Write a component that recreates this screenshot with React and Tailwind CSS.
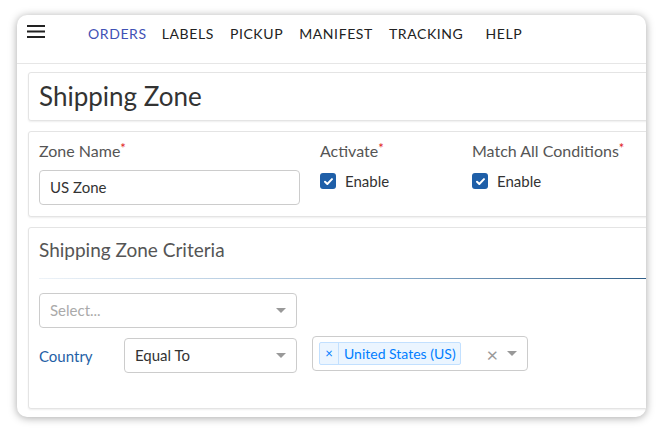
import React from 'react';

const navItems = [
  { label: 'ORDERS', active: true, ml: 'ml-[43px]' },
  { label: 'LABELS', ml: 'ml-[15px]' },
  { label: 'PICKUP', ml: 'ml-[16px]' },
  { label: 'MANIFEST', ml: 'ml-[16px]' },
  { label: 'TRACKING', ml: 'ml-[16px]' },
  { label: 'HELP', ml: 'ml-[22px]' },
];

function Caret() {
  return <span className="block w-0 h-0 border-x-[5px] border-t-[5px] border-x-transparent border-t-[#999]" />;
}

function Checkbox() {
  return (
    <span className="flex items-center justify-center w-4 h-4 rounded-[3px] bg-[#1f5fa8]">
      <svg viewBox="0 0 12 12" className="w-[11px] h-[11px]">
        <path d="M2.2 6.3l2.5 2.4L9.8 3.4" stroke="white" strokeWidth="2.2" fill="none" strokeLinecap="round" strokeLinejoin="round" />
      </svg>
    </span>
  );
}

function Label({ children }) {
  return (
    <div className="text-[16px] leading-5 text-[#555]">
      {children}
      <span className="text-[#e02020] text-[13px] leading-none align-top relative top-[1px]">*</span>
    </div>
  );
}

function Card({ className = '', children }) {
  return (
    <div className={`bg-white border border-[#e4e4e4] rounded-[3px] shadow-[0_1px_2px_rgba(0,0,0,0.07)] -mr-[8px] ${className}`}>
      {children}
    </div>
  );
}

export default function App() {
  return (
    <div className="min-h-[435px] bg-white pt-[15px] pl-[17px] font-['Lato',sans-serif]">
      <div className="w-[629px] h-[402px] bg-white rounded-[10px] overflow-hidden shadow-[0_1px_8px_rgba(0,0,0,0.35)]">
        <nav className="h-[49px] border-b border-[#e6e6e6] flex items-start">
          <svg viewBox="0 0 18 13" className="w-[18px] h-[13px] ml-[10px] mt-[10px]">
            <rect x="0" y="0" width="18" height="2" fill="#222" />
            <rect x="0" y="5.5" width="18" height="2" fill="#222" />
            <rect x="0" y="11" width="18" height="2" fill="#222" />
          </svg>
          {navItems.map((item) => (
            <span
              key={item.label}
              className={`${item.ml} mt-[9px] text-[14px] leading-5 tracking-[0.6px] ${item.active ? 'text-[#3f51b5]' : 'text-[#222]'}`}
            >
              {item.label}
            </span>
          ))}
        </nav>

        <div className="pl-[11px] pt-[8px] flex flex-col gap-[10px]">
          <Card className="pt-[7px] pb-[8px] px-[10px]">
            <h1 className="text-[26px] leading-8 text-[#333]">Shipping Zone</h1>
          </Card>

          <Card className="pt-[9px] pb-[11px] px-[10px] flex">
            <div className="w-[281px]">
              <Label>Zone Name</Label>
              <div className="mt-[9px] w-[261px] h-[35px] border border-[#ccc] rounded-[4px] flex items-center px-[10px] text-[15px] text-[#333]">
                US Zone
              </div>
            </div>
            <div className="w-[152px]">
              <Label>Activate</Label>
              <div className="mt-[10px] flex items-center gap-[9px]">
                <Checkbox />
                <span className="text-[15px] leading-5 text-[#333]">Enable</span>
              </div>
            </div>
            <div>
              <Label>Match All Conditions</Label>
              <div className="mt-[10px] flex items-center gap-[9px]">
                <Checkbox />
                <span className="text-[15px] leading-5 text-[#333]">Enable</span>
              </div>
            </div>
          </Card>

          <Card className="pt-[10px] pb-[35px] pl-[10px]">
            <h2 className="text-[19px] leading-6 text-[#555]">Shipping Zone Criteria</h2>
            <div className="mt-[16px] h-px bg-gradient-to-r from-[#eef3f8] via-[#9bbad6] to-[#2c5c86]" />
            <div className="mt-[14px] w-[258px] h-[35px] border border-[#ccc] rounded-[4px] flex items-center justify-between pl-[10px] pr-[10px]">
              <span className="text-[15px] text-[#aaa]">Select...</span>
              <Caret />
            </div>
            <div className="mt-[8px] flex items-start">
              <span className="w-[85px] mt-[10px] text-[15px] leading-5 text-[#1f5fa6]">Country</span>
              <div className="mt-[2px] w-[173px] h-[35px] border border-[#ccc] rounded-[4px] flex items-center justify-between pl-[10px] pr-[10px]">
                <span className="text-[15px] text-[#333]">Equal To</span>
                <Caret />
              </div>
              <div className="ml-[15px] w-[216px] h-[35px] border border-[#ccc] rounded-[4px] flex items-center pl-[6px] pr-[10px]">
                <div className="flex items-stretch h-[23px] border border-[#c2e0ff] bg-[#ebf5ff] rounded-[2px] text-[#007eff]">
                  <span className="w-[19px] flex items-center justify-center border-r border-[#c2e0ff] text-[13px] leading-none">×</span>
                  <span className="pl-[5px] pr-[4px] flex items-center text-[14px] leading-none">United States (US)</span>
                </div>
                <span className="ml-auto text-[20px] leading-none text-[#999] mr-[9px]">×</span>
                <Caret />
              </div>
            </div>
          </Card>
        </div>
      </div>
    </div>
  );
}
